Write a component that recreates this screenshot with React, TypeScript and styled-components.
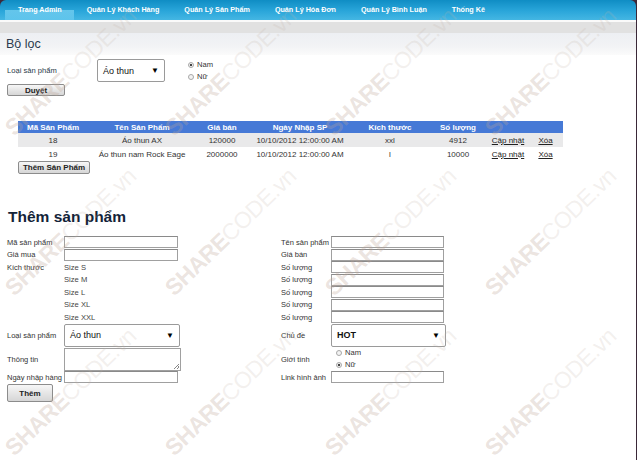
import styled, { createGlobalStyle } from 'styled-components';

const GlobalStyle = createGlobalStyle`
  body {
    margin: 0;
    background: #ffffff;
    font-family: "Liberation Sans", Arial, sans-serif;
    font-size: 8px;
    color: #333;
  }
`

const Frame = styled.div`
  position: relative;
  width: 636px;
  height: 460px;
  border-right: 1px solid #3a2838;
  overflow: hidden;
`

const NavWrap = styled.div`
  background: #3d2a3b;
`

const Nav = styled.nav`
  display: flex;
  height: 20px;
  padding-left: 5px;
  border-radius: 6px 6px 0 0;
  background: linear-gradient(#0f8dc4, #2aa6da 55%, #44b6e3);
`

const NavItem = styled.a<{ $active?: boolean }>`
  padding: 0 12px 0 13px;
  line-height: 20px;
  color: #fff;
  font-size: 7.2px;
  font-weight: bold;
  text-decoration: none;
  background: ${p => p.$active
    ? 'linear-gradient(rgba(255,255,255,0) 50%, rgba(150,225,250,0.55) 50%, rgba(120,210,245,0.5))'
    : 'none'};
`

const WhiteLine = styled.div`
  height: 2px;
  background: #fafafa;
`

const GrayBand = styled.div`
  height: 11px;
  background: #e1e1e1;
`

const TitleBand = styled.div`
  height: 22px;
  padding-left: 6px;
  display: flex;
  align-items: center;
  background: linear-gradient(#edeff3, #f2f3f5 60%, #fbfbfb);
  font-size: 12.5px;
  color: #2b3b4e;
`

const FilterRow = styled.div`
  display: flex;
  align-items: center;
  padding: 4px 0 0 7px;
`

const FilterLabel = styled.span`
  width: 90px;
  font-size: 7.6px;
  color: #2a3a4a;
`

const SelectBox = styled.div<{ $w: number; $bold?: boolean }>`
  box-sizing: border-box;
  width: ${p => p.$w}px;
  height: 23px;
  padding: 0 5px;
  display: flex;
  align-items: center;
  justify-content: space-between;
  border: 1px solid #9a9a9a;
  border-radius: 2px;
  background: #fff;
  font-size: 9px;
  font-weight: ${p => (p.$bold ? 'bold' : 'normal')};
  color: #111;
`

const Arrow = styled.span`
  font-size: 8px;
  color: #000;
`

const RadioGroup = styled.div<{ $ml: number }>`
  display: flex;
  flex-direction: column;
  gap: 2px;
  margin-left: ${p => p.$ml}px;
`

const RadioLine = styled.label`
  display: flex;
  align-items: center;
  gap: 3px;
  font-size: 7.6px;
  line-height: 10px;
  color: #333;
`

const RadioDot = styled.span<{ $on?: boolean }>`
  box-sizing: border-box;
  width: 6px;
  height: 6px;
  border-radius: 50%;
  border: 1px solid #a8a8a8;
  background: ${p => (p.$on ? 'radial-gradient(#444 35%, #eee 45%)' : '#f3f3f3')};
`

const Button = styled.button<{ $w: number; $h: number }>`
  box-sizing: border-box;
  width: ${p => p.$w}px;
  height: ${p => p.$h}px;
  padding: 0;
  border: 1px solid #8c8c8c;
  border-radius: 2px;
  background: linear-gradient(#f7f7f7, #e6e6e6 50%, #d6d6d6);
  font-family: "Liberation Sans", Arial, sans-serif;
  font-size: 8px;
  font-weight: bold;
  color: #222;
`

const FilterButton = styled(Button)`
  margin: 2px 0 0 7px;
  display: block;
`

const ProductTable = styled.table`
  margin: 25px 0 0 18px;
  width: 545px;
  border-collapse: collapse;
  table-layout: fixed;
  font-size: 8px;
`

const HeadCell = styled.th<{ $w: number }>`
  width: ${p => p.$w}px;
  height: 12px;
  padding: 0;
  background: #4679d6;
  color: #fff;
  font-weight: bold;
  text-align: center;
`

const Row = styled.tr<{ $alt?: boolean }>`
  height: 14px;
  background: ${p => (p.$alt ? '#e9e9ea' : '#fff')};
`

const Cell = styled.td`
  padding: 0;
  text-align: center;
  color: #333;
  white-space: nowrap;
`

const ActionLink = styled.a`
  color: #222;
  text-decoration: underline;
`

const AddButton = styled(Button)`
  display: block;
  margin-left: 18px;
`

const FormTitle = styled.h2`
  margin: 33px 0 0 8px;
  font-size: 15.5px;
  line-height: 19px;
  font-weight: bold;
  color: #132338;
`

const FormGrid = styled.div`
  margin: 10px 0 0 7px;
  display: grid;
  grid-template-columns: 57px 217px 50px 1fr;
  grid-template-rows: repeat(7, 12.5px) 23.5px 24px 12px;
  align-items: center;
`

const FieldLabel = styled.span<{ $col: number; $row: number }>`
  grid-column: ${p => p.$col};
  grid-row: ${p => p.$row};
  font-size: 7.5px;
  color: #333;
  white-space: nowrap;
`

const TextInput = styled.div<{ $w: number }>`
  box-sizing: border-box;
  width: ${p => p.$w}px;
  height: 12px;
  border: 1px solid #a0a0a0;
  border-top-color: #8a8a8a;
  background: #fff;
`

const Slot = styled.div<{ $col: number; $row: number }>`
  grid-column: ${p => p.$col};
  grid-row: ${p => p.$row};
  display: flex;
  align-items: center;
`

const SizeText = styled.span`
  font-size: 7.6px;
  color: #444;
`

const TextArea = styled.div`
  position: relative;
  box-sizing: border-box;
  width: 117px;
  height: 23px;
  border: 1px solid #a0a0a0;
  background: #fff;
`

const Grip = styled.span`
  position: absolute;
  right: 1px;
  bottom: 1px;
  width: 5px;
  height: 5px;
  background: linear-gradient(135deg, transparent 45%, #888 45%, #888 55%, transparent 55%, transparent 70%, #888 70%, #888 80%, transparent 80%);
`

const SubmitButton = styled(Button)`
  display: block;
  margin: 1px 0 0 7px;
`

const WatermarkLayer = styled.div`
  position: absolute;
  inset: 0;
  pointer-events: none;
`

const Watermark = styled.span`
  position: absolute;
  transform-origin: 0 100%;
  transform: rotate(-44deg);
  font-family: "Liberation Sans", Arial, sans-serif;
  font-size: 23px;
  line-height: 23px;
  white-space: nowrap;
  color: rgba(195, 180, 168, 0.2);
  letter-spacing: -0.5px;
`

const Bold = styled.b`
  font-weight: 900;
  color: rgba(190, 165, 150, 0.3);
`

const navItems = ['Trang Admin', 'Quản Lý Khách Hàng', 'Quản Lý Sản Phẩm', 'Quản Lý Hóa Đơn', 'Quản Lý Bình Luận', 'Thống Kê']

const columns: [string, number][] = [
  ['Mã Sản Phẩm', 70], ['Tên Sản Phẩm', 108], ['Giá bán', 52], ['Ngày Nhập SP', 104],
  ['Kích thước', 76], ['Số lượng', 60], ['', 40], ['', 35],
]

const products = [
  { id: 18, name: 'Áo thun AX', price: 120000, date: '10/10/2012 12:00:00 AM', size: 'xxl', qty: 4912 },
  { id: 19, name: 'Áo thun nam Rock Eage', price: 2000000, date: '10/10/2012 12:00:00 AM', size: 'l', qty: 10000 },
]

const sizes = ['Size S', 'Size M', 'Size L', 'Size XL', 'Size XXL']

const marks: [number, number][] = []
for (const y of [140, 300, 460]) {
  for (const x of [17, 177, 337, 497]) marks.push([x, y])
}

function App() {
  return (
    <Frame>
      <GlobalStyle />
      <NavWrap>
        <Nav>
          {navItems.map((n, i) => (
            <NavItem key={n} $active={i === 0}>{n}</NavItem>
          ))}
        </Nav>
      </NavWrap>
      <WhiteLine />
      <GrayBand />
      <TitleBand>Bộ lọc</TitleBand>

      <FilterRow>
        <FilterLabel>Loại sản phẩm</FilterLabel>
        <SelectBox $w={68}>Áo thun <Arrow>▼</Arrow></SelectBox>
        <RadioGroup $ml={23}>
          <RadioLine><RadioDot $on />Nam</RadioLine>
          <RadioLine><RadioDot />Nữ</RadioLine>
        </RadioGroup>
      </FilterRow>
      <FilterButton $w={58} $h={12}>Duyệt</FilterButton>

      <ProductTable>
        <thead>
          <tr>
            {columns.map(([c, w], i) => <HeadCell key={i} $w={w}>{c}</HeadCell>)}
          </tr>
        </thead>
        <tbody>
          {products.map((p, i) => (
            <Row key={p.id} $alt={i === 0}>
              <Cell>{p.id}</Cell>
              <Cell>{p.name}</Cell>
              <Cell>{p.price}</Cell>
              <Cell>{p.date}</Cell>
              <Cell>{p.size}</Cell>
              <Cell>{p.qty}</Cell>
              <Cell><ActionLink>Cập nhật</ActionLink></Cell>
              <Cell><ActionLink>Xóa</ActionLink></Cell>
            </Row>
          ))}
        </tbody>
      </ProductTable>
      <AddButton $w={72} $h={13}>Thêm Sản Phẩm</AddButton>

      <FormTitle>Thêm sản phẩm</FormTitle>
      <FormGrid>
        <FieldLabel $col={1} $row={1}>Mã sản phẩm</FieldLabel>
        <Slot $col={2} $row={1}><TextInput $w={114} /></Slot>
        <FieldLabel $col={1} $row={2}>Giá mua</FieldLabel>
        <Slot $col={2} $row={2}><TextInput $w={114} /></Slot>
        <FieldLabel $col={1} $row={3}>Kích thước</FieldLabel>
        {sizes.map((s, i) => (
          <Slot key={s} $col={2} $row={3 + i}><SizeText>{s}</SizeText></Slot>
        ))}
        <FieldLabel $col={1} $row={8}>Loại sản phẩm</FieldLabel>
        <Slot $col={2} $row={8}><SelectBox $w={116}>Áo thun <Arrow>▼</Arrow></SelectBox></Slot>
        <FieldLabel $col={1} $row={9}>Thông tin</FieldLabel>
        <Slot $col={2} $row={9}><TextArea><Grip /></TextArea></Slot>
        <FieldLabel $col={1} $row={10}>Ngày nhập hàng</FieldLabel>
        <Slot $col={2} $row={10}><TextInput $w={114} /></Slot>

        <FieldLabel $col={3} $row={1}>Tên sản phẩm</FieldLabel>
        <Slot $col={4} $row={1}><TextInput $w={113} /></Slot>
        <FieldLabel $col={3} $row={2}>Giá bán</FieldLabel>
        <Slot $col={4} $row={2}><TextInput $w={113} /></Slot>
        {sizes.map((s, i) => (
          <FieldLabel key={'l' + s} $col={3} $row={3 + i}>Số lượng</FieldLabel>
        ))}
        {sizes.map((s, i) => (
          <Slot key={'i' + s} $col={4} $row={3 + i}><TextInput $w={113} /></Slot>
        ))}
        <FieldLabel $col={3} $row={8}>Chủ đề</FieldLabel>
        <Slot $col={4} $row={8}><SelectBox $w={115} $bold>HOT <Arrow>▼</Arrow></SelectBox></Slot>
        <FieldLabel $col={3} $row={9}>Giới tính</FieldLabel>
        <Slot $col={4} $row={9}>
          <RadioGroup $ml={5}>
            <RadioLine><RadioDot />Nam</RadioLine>
            <RadioLine><RadioDot $on />Nữ</RadioLine>
          </RadioGroup>
        </Slot>
        <FieldLabel $col={3} $row={10}>Link hình ảnh</FieldLabel>
        <Slot $col={4} $row={10}><TextInput $w={113} /></Slot>
      </FormGrid>
      <SubmitButton $w={46} $h={18}>Thêm</SubmitButton>

      <WatermarkLayer>
        {marks.map(([x, y]) => (
          <Watermark key={x + '-' + y} style={{ left: x, top: y - 23 }}>
            <Bold>SHARE</Bold>CODE.vn
          </Watermark>
        ))}
      </WatermarkLayer>
    </Frame>
  );
}

export default App;
